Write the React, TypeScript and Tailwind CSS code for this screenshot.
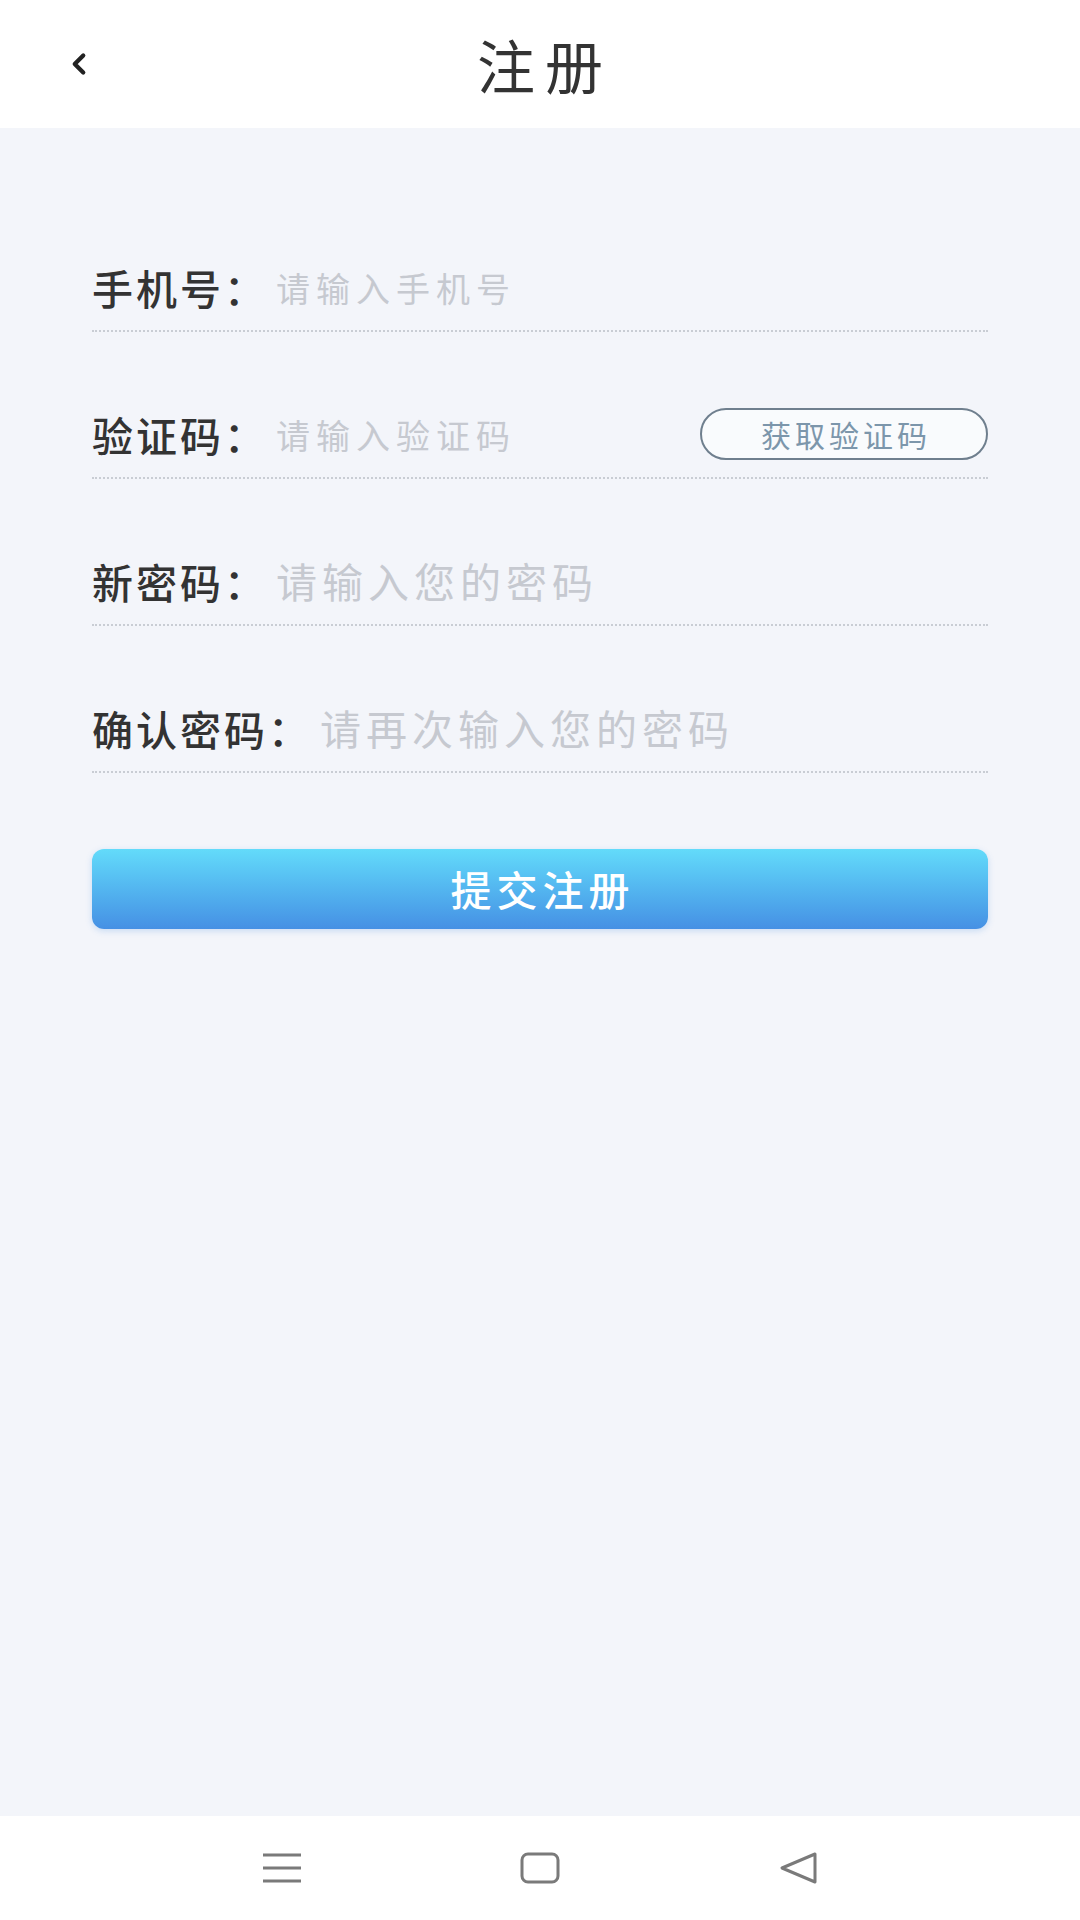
import { ChevronLeft } from "lucide-react";

const font = { fontFamily: '"Noto Sans CJK SC", "Noto Sans", sans-serif' };

type Field = {
  label: string;
  placeholder: string;
  small?: boolean;
  code?: boolean;
};

const fields: Field[] = [
  { label: "手机号：", placeholder: "请输入手机号", small: true },
  { label: "验证码：", placeholder: "请输入验证码", small: true, code: true },
  { label: "新密码：", placeholder: "请输入您的密码" },
  { label: "确认密码：", placeholder: "请再次输入您的密码" },
];

const FormRow = ({ field }: { field: Field }) => (
  <div className="flex h-[88px] items-center border-b-2 border-dotted border-[#c9cdd4]">
    <span className="shrink-0 text-[41px] font-medium leading-none tracking-[3px] text-[#333]">
      {field.label}
    </span>
    <input
      style={font}
      placeholder={field.placeholder}
      className={
        field.small
          ? "ml-[8px] min-w-0 flex-1 bg-transparent text-[34px] tracking-[6px] text-[#333] outline-none placeholder:text-[#c6c9d0]"
          : "ml-[8px] min-w-0 flex-1 bg-transparent text-[41px] tracking-[5px] text-[#333] outline-none placeholder:text-[#c6c9d0]"
      }
    />
    {field.code && (
      <button className="flex h-[52px] w-[288px] shrink-0 items-center justify-center rounded-full border-2 border-[#6f7f8e] bg-[#f9fbfd] pl-[4px] text-[30px] tracking-[4px] text-[#7c96ab]">
        获取验证码
      </button>
    )}
  </div>
);

const NavBar = () => (
  <div className="flex h-[104px] items-center justify-center gap-[218px] bg-white">
    <svg width="40" height="32" viewBox="0 0 40 32" fill="none" stroke="#7a7a7a" strokeWidth="3">
      <line x1="1" y1="3" x2="39" y2="3" />
      <line x1="1" y1="16" x2="39" y2="16" />
      <line x1="1" y1="29" x2="39" y2="29" />
    </svg>
    <svg width="40" height="32" viewBox="0 0 40 32" fill="none" stroke="#7a7a7a" strokeWidth="3">
      <rect x="2" y="2" width="36" height="28" rx="6" />
    </svg>
    <svg width="40" height="32" viewBox="0 0 40 32" fill="none" stroke="#7a7a7a" strokeWidth="3" strokeLinejoin="round">
      <path d="M37 2 L4 16 L37 30 Z" />
    </svg>
  </div>
);

export default function App() {
  return (
    <div style={font} className="flex h-[1920px] w-[1080px] flex-col bg-[#f3f5fa]">
      <header className="grid h-[128px] grid-cols-[1fr_auto_1fr] items-center bg-white">
        <div className="pl-[62px]">
          <ChevronLeft size={34} strokeWidth={3} color="#222" />
        </div>
        <h1 className="pl-[10px] text-[58px] font-normal tracking-[10px] text-[#333]">注册</h1>
        <div />
      </header>

      <main className="flex flex-1 flex-col gap-[59px] px-[92px] pt-[116px]">
        {fields.map((f) => (
          <FormRow key={f.label} field={f} />
        ))}
        <button className="mt-[17px] flex h-[80px] items-center justify-center rounded-[12px] bg-linear-to-b from-[#63dbfa] to-[#4690e4] pl-[5px] text-[41px] font-medium tracking-[5px] text-white shadow-[0_2px_6px_rgba(70,144,228,0.25)]">
          提交注册
        </button>
      </main>

      <NavBar />
    </div>
  );
}
